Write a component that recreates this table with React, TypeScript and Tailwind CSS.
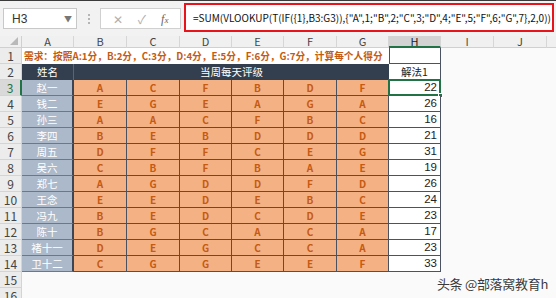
import React from 'react';

const letters = ['A', 'B', 'C', 'D', 'E', 'F', 'G', 'H', 'I', 'J'];

const people: { name: string; grades: string[]; score: number }[] = [
  { name: '赵一', grades: ['A', 'C', 'F', 'B', 'D', 'F'], score: 22 },
  { name: '钱二', grades: ['E', 'G', 'E', 'A', 'G', 'A'], score: 26 },
  { name: '孙三', grades: ['A', 'A', 'C', 'F', 'B', 'C'], score: 16 },
  { name: '李四', grades: ['B', 'E', 'B', 'D', 'D', 'D'], score: 21 },
  { name: '周五', grades: ['D', 'F', 'F', 'C', 'E', 'G'], score: 31 },
  { name: '吴六', grades: ['C', 'B', 'F', 'B', 'A', 'E'], score: 19 },
  { name: '郑七', grades: ['A', 'G', 'D', 'D', 'F', 'D'], score: 26 },
  { name: '王念', grades: ['E', 'E', 'D', 'E', 'B', 'C'], score: 24 },
  { name: '冯九', grades: ['B', 'E', 'D', 'C', 'D', 'E'], score: 23 },
  { name: '陈十', grades: ['B', 'G', 'C', 'A', 'C', 'A'], score: 17 },
  { name: '褚十一', grades: ['D', 'E', 'G', 'C', 'C', 'A'], score: 23 },
  { name: '卫十二', grades: ['C', 'G', 'G', 'E', 'E', 'F'], score: 33 },
];

const formula = '=SUM(VLOOKUP(T(IF({1},B3:G3)),{"A",1;"B",2;"C",3;"D",4;"E",5;"F",6;"G",7},2,0))';

function RowHead({ n, active }: { n: number; active?: boolean }) {
  return (
    <div
      className={
        'flex items-center justify-center border-b border-r border-[#d4d4d4] text-[12px] leading-none ' +
        (active ? 'bg-[#d9d9d9] text-[#217346] border-r-2 border-r-[#217346]' : 'bg-[#ececec] text-[#444]')
      }
    >
      {n}
    </div>
  );
}

function Empty() {
  return <div className="bg-[#fafafa]" />;
}

export default function App() {
  return (
    <div className="relative h-[298px] w-[556px] overflow-hidden border-t border-[#3a3a3a] bg-[#fafafa] font-['Noto_Sans_CJK_SC',sans-serif]">
      {/* formula bar */}
      <div className="flex h-[35px] items-center bg-[#f2f2f2]">
        <div className="ml-[3px] flex h-[21px] w-[74px] shrink-0 items-center justify-between border border-[#c8c8c8] bg-white pl-[8px] pr-[4px]">
          <span className="font-['Liberation_Sans',sans-serif] text-[12px] text-[#333]">H3</span>
          <span className="text-[8px] text-[#777]">▼</span>
        </div>
        <div className="flex w-[23px] shrink-0 flex-col items-center gap-[2px]">
          <span className="h-[2px] w-[2px] bg-[#b5b5b5]" />
          <span className="h-[2px] w-[2px] bg-[#b5b5b5]" />
          <span className="h-[2px] w-[2px] bg-[#b5b5b5]" />
        </div>
        <div className="flex h-[21px] w-[81px] shrink-0 items-center justify-around border border-[#d0d0d0] bg-white px-[4px] text-[#b0b0b0]">
          <span className="text-[12px]">✕</span>
          <span className="text-[12px]">✓</span>
          <span className="font-['Liberation_Serif',serif] text-[12px] italic text-[#666]">
            f<span className="text-[9px]">x</span>
          </span>
        </div>
        <div className="mr-[2px] ml-[3px] mt-[2px] flex h-[29px] min-w-0 flex-1 items-center self-start overflow-hidden border-2 border-[#e8141b] bg-white pl-[7px]">
          <span className="whitespace-nowrap text-[10px] text-[#111]">{formula}</span>
        </div>
      </div>

      {/* sheet */}
      <div className="grid grid-cols-[22px_52px_53px_53px_52px_52px_53px_52px_52px_53px_53px_1fr] grid-rows-[12px_repeat(16,16px)]">
        {/* column headers */}
        <div className="relative border-b border-r border-[#d0d0d0] bg-[#f0f0f0]">
          <span className="absolute bottom-[2px] right-[3px] h-0 w-0 border-b-[8px] border-l-[8px] border-b-[#b9b9b9] border-l-transparent" />
        </div>
        {letters.map((l) => (
          <div
            key={l}
            className={
              'flex items-center justify-center border-r border-[#d6d6d6] text-[11px] leading-none ' +
              (l === 'H'
                ? 'border-b-2 border-b-[#217346] bg-[#d3d3d3] text-[#222]'
                : 'border-b border-b-[#d0d0d0] bg-[#f0f0f0] text-[#444]')
            }
          >
            {l}
          </div>
        ))}
        <div className="border-b border-[#d0d0d0] bg-[#f0f0f0]" />

        {/* row 1 */}
        <RowHead n={1} />
        <div className="col-span-7 flex items-center whitespace-nowrap bg-white pl-[2px] text-[9.7px] font-bold text-[#c55a11]">
          需求：按照A:1分，B:2分，C:3分，D:4分，E:5分，F:6分，G:7分，计算每个人得分
        </div>
        <div className="border-b border-l border-r border-[#4b5261] bg-white" />
        <Empty />
        <Empty />
        <Empty />

        {/* row 2 */}
        <RowHead n={2} />
        <div className="flex items-center justify-center border-r border-[#5b6473] bg-[#333f4f] text-[10.5px] text-white">
          姓名
        </div>
        <div className="col-span-6 flex items-center justify-center bg-[#333f4f] text-[10.5px] text-white">
          当周每天评级
        </div>
        <div className="flex items-center justify-center border-b border-r border-[#4b5261] bg-white text-[10.5px] text-[#222]">
          解法1
        </div>
        <Empty />
        <Empty />
        <Empty />

        {/* data rows */}
        {people.map((p, i) => (
          <React.Fragment key={p.name}>
            <RowHead n={i + 3} active={i === 0} />
            <div className="flex items-center justify-center border-b border-r-2 border-b-[#6d7787] border-r-[#3b4554] bg-[#acb9ca] text-[10.5px] text-white">
              {p.name}
            </div>
            {p.grades.map((g, j) => (
              <div
                key={j}
                className="flex items-center justify-center border-b border-r border-[#4a5262] bg-[#f4b183] text-[10px] font-bold text-[#c55a11]"
              >
                {g}
              </div>
            ))}
            <div className="relative flex items-center justify-end border-b border-r border-[#4b5261] bg-white pr-[3px] font-['Liberation_Sans',sans-serif] text-[11.5px] text-[#222]">
              {p.score}
              {i === 0 && (
                <>
                  <span className="absolute -left-px -top-px bottom-[-1px] right-[-1px] border-2 border-[#217346]" />
                  <span className="absolute bottom-[-3px] right-[-3px] h-[5px] w-[5px] border border-white bg-[#217346]" />
                </>
              )}
            </div>
            <Empty />
            <Empty />
            <Empty />
          </React.Fragment>
        ))}

        {/* empty rows */}
        {[15, 16].map((n) => (
          <React.Fragment key={n}>
            <RowHead n={n} />
            <div className="col-span-11 bg-[#fafafa]" />
          </React.Fragment>
        ))}
      </div>

      <div className="absolute bottom-[5px] right-[8px] text-[13px] tracking-[-0.3px] text-[#3a3a3a] [text-shadow:0_0_2px_#fff,0_0_2px_#fff]">
        头条 @部落窝教育h
      </div>
    </div>
  );
}
